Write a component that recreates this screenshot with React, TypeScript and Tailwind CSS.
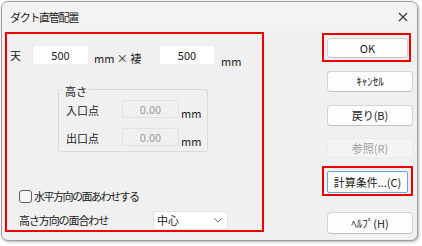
import React from 'react'

const btn = 'flex items-center justify-center bg-[#fdfdfd] border border-[#d3d3d3] border-b-[#c0c0c0] rounded-[4px]'

function Field({ label, value }: { label: string; value: string }) {
  return (
    <div className="flex items-start pl-[7px]">
      <span className="w-[56px] leading-[18px] mt-[1px]">{label}</span>
      <div className="w-[57px] h-[18px] flex items-center justify-center bg-[#f0f0f0] border border-[#e2e2e2] text-[#9a9a9a]">{value}</div>
      <span className="ml-[2px] mt-[6px]">mm</span>
    </div>
  )
}

export default function App() {
  return (
    <div className="w-[422px] h-[246px] bg-white pt-[1px] pl-[1px] font-['Noto_Sans_CJK_JP',sans-serif] text-[11px] leading-[15px] text-[#1a1a1a]">
      <div className="w-[417px] h-[240px] flex flex-col bg-[#f0f0f0] border border-[#9c9c9c] rounded-[7px] shadow-[1px_1px_3px_rgba(0,0,0,0.3)] overflow-hidden">
        {/* title bar */}
        <div className="h-[29px] shrink-0 flex items-center justify-between pl-[8px] pr-[9px] bg-[#f3f3f3]">
          <span className="mt-[2px] tracking-[-1.3px]">ダクト直管配置</span>
          <svg width="10" height="10" viewBox="0 0 10 10" className="mt-[1px]">
            <path d="M1 1 L9 9 M9 1 L1 9" stroke="#333" strokeWidth="1.1" />
          </svg>
        </div>

        <div className="flex">
          {/* left panel */}
          <div className="ml-[3px] mt-[1px] w-[259px] h-[200px] border-2 border-[#ee0000] flex flex-col">
            <div className="flex items-start mt-[11px]">
              <span className="w-[25px] pl-[3px] mt-[3px] leading-[15px]">天</span>
              <div className="w-[57px] h-[20px] flex items-center justify-center bg-white border border-[#ececec]">500</div>
              <span className="w-[65px] ml-[5px] mt-[6px] whitespace-pre">mm × 褄</span>
              <div className="w-[56px] h-[20px] flex items-center justify-center bg-white border border-[#ececec]">500</div>
              <span className="ml-[6px] mt-[9px]">mm</span>
            </div>

            <fieldset className="ml-[51px] mt-[12px] w-[150px] h-[75px] border border-[#dadada] rounded-[2px]">
              <legend className="ml-[4px] px-[2px] pt-[4px] leading-[12px]">高さ</legend>
              <div className="mt-[3px] flex flex-col gap-[7px]">
                <Field label="入口点" value="0.00" />
                <Field label="出口点" value="0.00" />
              </div>
            </fieldset>

            <div className="flex items-center mt-[37px] ml-[12px]">
              <div className="w-[13px] h-[13px] bg-[#f7f7f7] border border-[#5e5e5e] rounded-[3px]" />
              <span className="ml-[2px] tracking-[-1.5px]">水平方向の面あわせする</span>
            </div>

            <div className="flex items-center mt-[7px] ml-[12px]">
              <span className="w-[134px] leading-[19px] tracking-[-1.1px]">高さ方向の面合わせ</span>
              <div className="w-[75px] h-[19px] flex items-center justify-between pl-[3px] pr-[5px] bg-white border border-[#e0e0e0] rounded-[3px]">
                <span>中心</span>
                <svg width="8" height="5" viewBox="0 0 8 5">
                  <path d="M0.5 0.5 L4 4 L7.5 0.5" fill="none" stroke="#555" strokeWidth="0.9" />
                </svg>
              </div>
            </div>
          </div>

          {/* right buttons */}
          <div className="ml-[58px] mt-[2px] w-[91px] flex flex-col">
            <div className="w-[89px] h-[29px] border-2 border-[#ee0000] pl-[3px] pt-[3px]">
              <div className={`${btn} w-[81px] h-[20px]`}>OK</div>
            </div>
            <div className={`${btn} ml-[5px] mt-[9px] w-[86px] h-[21px]`}>ｷｬﾝｾﾙ</div>
            <div className={`${btn} ml-[5px] mt-[13px] w-[86px] h-[21px]`}>戻り(B)</div>
            <div className="ml-[5px] mt-[12px] w-[86px] h-[20px] flex items-center justify-center bg-[#f5f5f5] border border-[#ebebeb] rounded-[4px] text-[#a0a0a0]">参照(R)</div>
            <div className="w-[91px] h-[30px] mt-[8px] border-2 border-[#ee0000] pl-[3px] pt-[3px]">
              <div className="w-[81px] h-[22px] flex items-center justify-center bg-[#fdfdfd] border border-[#6aa6dc] rounded-[2px]">計算条件...(C)</div>
            </div>
            <div className={`${btn} ml-[5px] mt-[16px] w-[86px] h-[22px]`}>ﾍﾙﾌﾟ(H)</div>
          </div>
        </div>
      </div>
    </div>
  )
}
